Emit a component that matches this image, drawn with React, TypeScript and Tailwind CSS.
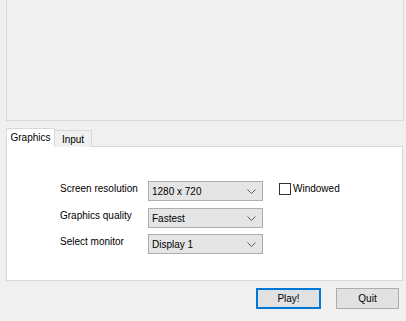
import React, { useState } from 'react';

const font = { fontFamily: '"Liberation Sans", Arial, sans-serif' };

const Chevron: React.FC = () => (
  <svg width="9" height="5" viewBox="0 0 9 5" className="shrink-0">
    <path d="M0.5 0.5 L4.5 4.5 L8.5 0.5" fill="none" stroke="#5a5a5a" strokeWidth="1" />
  </svg>
);

const Combo: React.FC<{ value: string }> = ({ value }) => (
  <div className="w-[115px] h-[20px] bg-[#e5e5e5] border border-[#adadad] flex items-center justify-between pl-[3px] pr-[6px] text-[10px] text-black whitespace-nowrap">
    <span>{value}</span>
    <Chevron />
  </div>
);

const App: React.FC = () => {
  const [tab, setTab] = useState<'graphics' | 'input'>('graphics');
  const [windowed, setWindowed] = useState(false);

  const rows = [
    { label: 'Screen resolution', value: '1280 x 720', mt: 'mt-[34px]' },
    { label: 'Graphics quality', value: 'Fastest', mt: 'mt-[7px]' },
    { label: 'Select monitor', value: 'Display 1', mt: 'mt-[6px]' },
  ];

  return (
    <div className="w-[406px] h-[321px] bg-[#f0f0f0] flex flex-col pl-[6px] pr-[2px] text-[10px] text-black" style={font}>
      {/* верхняя панель с картинкой (пустая) */}
      <div className="h-[121px] border-x border-b border-[#dadada] bg-[#f0f0f0]" />

      {/* вкладки */}
      <div className="mt-[7px] flex items-end h-[19px] relative z-10">
        <button
          onClick={() => setTab('graphics')}
          className={`h-[19px] w-[49px] border border-b-0 border-[#d9d9d9] text-[10px] leading-[16px] whitespace-nowrap ${tab === 'graphics' ? 'bg-white' : 'bg-[#f0f0f0]'}`}
        >
          Graphics
        </button>
        <button
          onClick={() => setTab('input')}
          className={`h-[17px] w-[37px] border border-l-0 border-b-0 border-[#d9d9d9] text-[10px] leading-[16px] pt-[1px] whitespace-nowrap ${tab === 'input' ? 'bg-white' : 'bg-[#f0f0f0]'}`}
        >
          Input
        </button>
      </div>

      {/* содержимое вкладки */}
      <div className="h-[135px] mr-[1px] -mt-px bg-white border border-[#d9d9d9] flex flex-col pl-[53px]">
        {tab === 'graphics' &&
          rows.map((r, i) => (
            <div key={r.label} className={`flex items-start h-[20px] ${r.mt}`}>
              <span className="w-[88px] leading-[14px] pt-[1px] whitespace-nowrap">{r.label}</span>
              <Combo value={r.value} />
              {i === 0 && (
                <label className="ml-[16px] mt-[2px] flex items-center gap-[2px] cursor-pointer">
                  <span
                    onClick={() => setWindowed(!windowed)}
                    className="w-[12px] h-[12px] border border-[#333] bg-white flex items-center justify-center text-[9px] leading-none"
                  >
                    {windowed ? '✓' : ''}
                  </span>
                  <span className="leading-[12px]">Windowed</span>
                </label>
              )}
            </div>
          ))}
      </div>

      {/* кнопки */}
      <div className="mt-[7px] flex justify-end gap-[15px] pr-[5px]">
        <button className="w-[65px] h-[21px] bg-[#e1e1e1] border-2 border-[#0078d7] text-[10px]">Play!</button>
        <button className="w-[63px] h-[21px] bg-[#e1e1e1] border border-[#adadad] text-[10px]">Quit</button>
      </div>
    </div>
  );
};

export default App;
